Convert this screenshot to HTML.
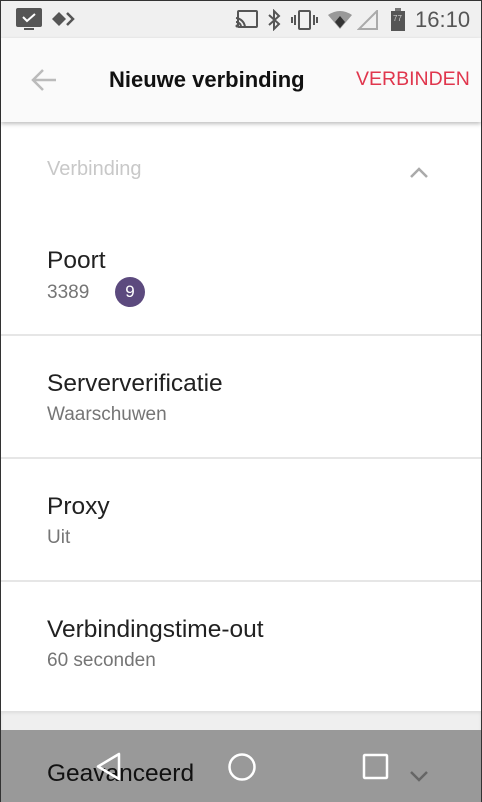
<!DOCTYPE html>
<html><head><style>
*{margin:0;padding:0;box-sizing:border-box}
body{width:482px;height:802px;overflow:hidden;position:relative;font-family:"Liberation Sans",sans-serif;background:#fff;border:1px solid #333}
.abs{position:absolute}
.sb{left:0;top:0;width:480px;height:37px;background:#f0f0f0}
.tb{left:0;top:37px;width:480px;height:84px;background:#fafafa;box-shadow:0 2px 4px rgba(0,0,0,.25)}
.t{font-size:24.5px;color:#212121;left:46px}
.s{font-size:19px;color:#757575;left:46px}
.div{left:0;width:480px;height:2px;background:#e6e6e6}
</style></head><body>
<div class="abs sb">
 <svg class="abs" style="left:14px;top:6px" width="28" height="26"><rect x="1" y="1" width="26" height="19" rx="2" fill="#555"/><rect x="9" y="21" width="10" height="2" fill="#555"/><path d="M8 10l4 4 8-7" stroke="#fff" stroke-width="2" fill="none"/></svg>
 <svg class="abs" style="left:50px;top:10px" width="28" height="18"><path d="M1 8l7-7 7 7-7 7z" fill="#555"/><path d="M16 2l6 6-6 6" stroke="#555" stroke-width="2.5" fill="none"/></svg>
 <svg class="abs" style="left:234px;top:9px" width="24" height="20"><rect x="3" y="1" width="19" height="16" rx="1" stroke="#555" stroke-width="2" fill="none"/><path d="M1 8a10 10 0 0 1 9 9M1 12a5 5 0 0 1 5 5" stroke="#555" stroke-width="2" fill="none"/><circle cx="2" cy="16" r="1.5" fill="#555"/></svg>
 <svg class="abs" style="left:266px;top:8px" width="14" height="22"><path d="M2 6l10 9-5 5V2l5 5-10 9" stroke="#555" stroke-width="2" fill="none"/></svg>
 <svg class="abs" style="left:290px;top:9px" width="28" height="20"><rect x="8" y="1" width="11" height="18" rx="1" stroke="#555" stroke-width="2" fill="none"/><path d="M4 5v10M1 7v6M23 5v10M26 7v6" stroke="#555" stroke-width="2"/></svg>
 <svg class="abs" style="left:326px;top:9px" width="26" height="20"><path d="M1 5Q13-3 25 5L13 19z" fill="#999"/><path d="M13 6l5 6-5 6-5-6z" fill="#333"/></svg>
 <svg class="abs" style="left:356px;top:9px" width="22" height="20"><path d="M20 1v18H2z" fill="none" stroke="#aaa" stroke-width="2"/></svg>
 <svg class="abs" style="left:389px;top:7px" width="16" height="24"><rect x="5" y="0" width="6" height="3" fill="#777"/><rect x="1" y="3" width="14" height="20" fill="#555"/><text x="3" y="13" font-size="8" fill="#ccc" font-family="Liberation Sans">77</text></svg>
 <div class="abs" style="left:414px;top:6px;font-size:22px;color:#555">16:10</div>
</div>
<div class="abs tb">
 <svg class="abs" style="left:30px;top:31px" width="26" height="22"><path d="M2 11h23M12 1L2 11l10 10" stroke="#bbb" stroke-width="2.5" fill="none"/></svg>
 <div class="abs" style="left:108px;top:29px;font-size:22px;font-weight:bold;color:#111">Nieuwe verbinding</div>
 <div class="abs" style="left:355px;top:30px;font-size:19.5px;color:#e0364d">VERBINDEN</div>
</div>
<div class="abs" style="left:46px;top:157px;font-size:20px;color:#c8c8c8">Verbinding</div>
<svg class="abs" style="left:408px;top:165px" width="20" height="14"><path d="M2 11l8-8 8 8" stroke="#aaa" stroke-width="2.5" fill="none"/></svg>
<div class="abs t" style="top:246px">Poort</div>
<div class="abs s" style="top:281px">3389</div>
<div class="abs" style="left:114px;top:276px;width:30px;height:30px;border-radius:50%;background:#5c4a7e;color:#fff;font-size:17px;text-align:center;line-height:30px">9</div>
<div class="abs div" style="top:333px"></div>
<div class="abs t" style="top:369px">Serververificatie</div>
<div class="abs s" style="top:403px">Waarschuwen</div>
<div class="abs div" style="top:456px"></div>
<div class="abs t" style="top:492px">Proxy</div>
<div class="abs s" style="top:526px">Uit</div>
<div class="abs div" style="top:579px"></div>
<div class="abs t" style="top:615px">Verbindingstime-out</div>
<div class="abs s" style="top:649px">60 seconden</div>
<div class="abs" style="left:0;top:710px;width:480px;height:20px;background:#efefef;box-shadow:inset 0 2px 3px rgba(0,0,0,.08)"></div>
<div class="abs" style="left:0;top:729px;width:480px;height:72px;background:#999"></div>
<div class="abs" style="left:46px;top:759px;font-size:24.5px;color:#111">Geavanceerd</div>
<svg class="abs" style="left:408px;top:768px" width="20" height="14"><path d="M2 3l8 8 8-8" stroke="#666" stroke-width="2.5" fill="none"/></svg>
<svg class="abs" style="left:94px;top:750px" width="30" height="32"><path d="M24 3v25L3 15.5z" stroke="#fff" stroke-width="2.5" fill="none" stroke-linejoin="round"/></svg>
<svg class="abs" style="left:226px;top:751px" width="30" height="30"><circle cx="15" cy="15" r="12.5" stroke="#fff" stroke-width="2.5" fill="none"/></svg>
<svg class="abs" style="left:361px;top:752px" width="28" height="28"><rect x="2" y="2" width="23" height="23" rx="1" stroke="#fff" stroke-width="2.5" fill="none"/></svg>
</body></html>
